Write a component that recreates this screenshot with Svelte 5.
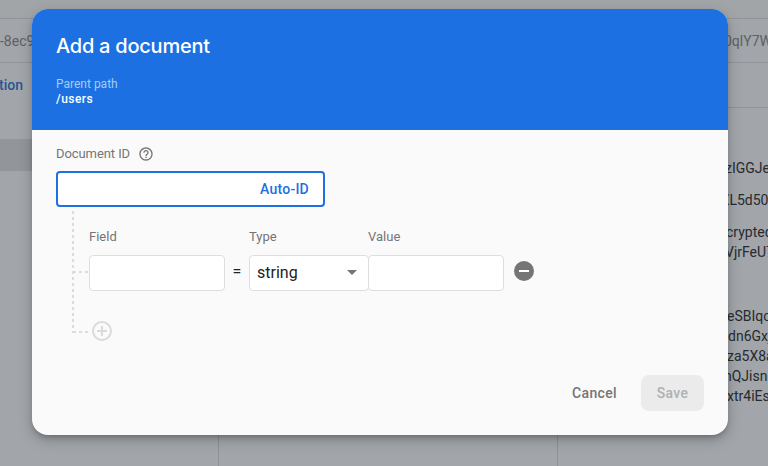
<script>
  let documentId = $state('');
  let field = $state('');
  let value = $state('');

  // Visible ends of the field values in the right-hand pane; the gap goes above each line.
  const values = [
    { text: 'zIGGJe', gap: 50, shift: -1 },
    { text: 'ZL5d50', gap: 12, shift: -5 },
    { text: 'crypted', gap: 12, shift: 0 },
    { text: 'VjrFeU7', gap: 0, shift: -1 },
    { text: 'eSBIqc', gap: 44, shift: 1 },
    { text: 'dn6Gxj', gap: 0, shift: 2 },
    { text: 'za5X8a', gap: 0, shift: 1 },
    { text: 'nQJisn', gap: 0, shift: -2 },
    { text: 'xtr4iEs', gap: 0, shift: 1 }
  ];
</script>

<div class="screen">
  <div class="page">
    <div class="topbar"></div>
    <div class="heads">
      <div class="head left">-8ec9</div>
      <div class="head right">0qlY7W</div>
    </div>
    <div class="columns">
      <div class="pane first">
        <div class="action">tion</div>
        <div class="selected"></div>
      </div>
      <div class="pane middle"></div>
      <div class="pane last">
        <div class="strip"></div>
        <div class="values">
          {#each values as v}
            <div class="line" style="margin-top:{v.gap}px;text-indent:{v.shift}px">{v.text}</div>
          {/each}
        </div>
      </div>
    </div>
  </div>

  <div class="dialog" role="dialog" aria-label="Add a document">
    <header>
      <h1>Add a document</h1>
      <div class="parent">Parent path</div>
      <div class="path">/users</div>
    </header>
    <div class="content">
      <div class="id-label">
        <span>Document ID</span>
        <svg width="16" height="16" viewBox="0 0 24 24" fill="#757575">
          <path d="M11 18h2v-2h-2v2zm1-16C6.48 2 2 6.48 2 12s4.480 10 10 10 10-4.480 10-10S17.520 2 12 2zm0 18c-4.410 0-8-3.590-8-8s3.590-8 8-8 8 3.590 8 8-3.590 8-8 8zm0-14c-2.210 0-4 1.790-4 4h2c0-1.100.9-2 2-2s2 .9 2 2c0 2-3 1.750-3 5h2c0-2.250 3-2.500 3-5 0-2.210-1.790-4-4-4z" />
        </svg>
      </div>
      <div class="id-box">
        <input aria-label="Document ID" bind:value={documentId} />
        <button class="auto">Auto-ID</button>
      </div>
      <div class="tree">
        <svg class="branches" width="17" height="124" viewBox="0 0 17 124" fill="none" stroke="#dcdcdc" stroke-width="2">
          <path d="M2 1V118" stroke-dasharray="3 3" />
          <path d="M1 62H5M8 62H11M14 62H17M1 122H5M8 122H11M14 122H17" />
        </svg>
        <div class="fields">
          <div class="row">
            <label class="field"><span>Field</span><input bind:value={field} /></label>
            <div class="equals">=</div>
            <div class="type">
              <span>Type</span>
              <div class="select">string
                <svg width="10" height="5" viewBox="0 0 10 5"><path d="M0 0h10L5 5z" fill="#757575" /></svg>
              </div>
            </div>
            <label class="value"><span>Value</span><input bind:value={value} /></label>
            <button class="remove" aria-label="Remove field">
              <svg width="24" height="24" viewBox="0 0 24 24"><circle cx="12" cy="12" r="10" fill="#757575" /><path d="M7 12h10" stroke="#fff" stroke-width="2" /></svg>
            </button>
          </div>
          <button class="add" aria-label="Add field">
            <svg width="24" height="24" viewBox="0 0 24 24" fill="none" stroke="#dadada" stroke-width="2"><circle cx="12" cy="12" r="9" /><path d="M7 12h10M12 7v10" /></svg>
          </button>
        </div>
      </div>
      <footer>
        <button class="cancel">Cancel</button>
        <button class="save" disabled>Save</button>
      </footer>
    </div>
  </div>
</div>

<style>
  .screen {
    position: relative;
    width: 768px;
    height: 466px;
    overflow: hidden;
    font-family: Roboto, sans-serif;
  }
  .screen * { box-sizing: border-box; }
  .page {
    display: flex;
    flex-direction: column;
    height: 100%;
    background: #a2a6ab;
  }
  .topbar { height: 19px; background: #a2a5a8; border-bottom: 1px solid #8f9296; }
  .heads {
    display: flex;
    justify-content: space-between;
    height: 44px;
    line-height: 44px;
    border-bottom: 1px solid #8f9296;
    background: #a2a5a9;
    color: #5e6164;
    font-size: 14px;
  }
  .head.right { width: 44px; white-space: nowrap; }
  .columns { display: flex; flex: 1; }
  .pane { width: 219px; border-right: 1px solid #8f9296; }
  .middle { width: 339px; }
  .last { width: 210px; border: 0; }
  .action {
    height: 76px;
    padding-top: 12px;
    text-indent: -1px;
    line-height: 20px;
    font-size: 14px;
    font-weight: 500;
    color: #295594;
  }
  .selected { height: 32px; background: #929599; }
  .strip { height: 45px; border-bottom: 1px solid #8f9296; }
  .values {
    width: 42px;
    margin-left: 168px;
    line-height: 20px;
    font-size: 14px;
    color: #272a2e;
    white-space: nowrap;
  }
  .dialog {
    position: absolute;
    left: 32px;
    top: 9px;
    width: 696px;
    height: 426px;
    border-radius: 16px;
    overflow: hidden;
    background: #fafafa;
    box-shadow: 0 3px 5px -1px rgba(0, 0, 0, .2), 0 5px 14px rgba(0, 0, 0, .22);
  }
  header { height: 121px; padding: 24px 24px 0; background: #1c70e2; color: #fff; }
  h1 {
    margin: 0;
    font: 500 20px/26px Inter, sans-serif;
    letter-spacing: -.24px;
  }
  .parent { margin-top: 18px; font-size: 12px; line-height: 15px; color: #a9cbf8; }
  .path { font-size: 12px; line-height: 15px; font-weight: 500; letter-spacing: .45px; }
  .content { padding: 16px 24px 0; }
  .id-label {
    display: flex;
    align-items: center;
    gap: 8px;
    height: 16px;
    font-size: 13px;
    color: #757575;
  }
  .id-label span { height: 16px; line-height: 15px; letter-spacing: -.08px; }
  .id-box {
    display: flex;
    align-items: center;
    width: 269px;
    height: 36px;
    margin-top: 9px;
    border: 2px solid #1c70e2;
    border-radius: 4px;
    background: #fff;
  }
  .id-box input { flex: 1; min-width: 0; border: 0; outline: 0; background: none; }
  button { padding: 0; border: 0; background: none; font: 500 14px/20px Roboto, sans-serif; }
  .auto { margin-right: 14px; color: #1c70e2; letter-spacing: .25px; }
  .tree { display: flex; height: 140px; padding: 3px 0 0 15px; }
  .branches { flex: none; }
  .fields { padding: 19px 0 0 1px; }
  .row { display: flex; align-items: flex-end; height: 62px; }
  .row span { display: block; height: 26px; font-size: 13px; line-height: 16px; color: #757575; }
  .field, .value { width: 136px; }
  .field input, .value input {
    display: block;
    width: 136px;
    height: 36px;
    border: 1px solid #dedede;
    border-radius: 4px;
    background: #fff;
    outline: 0;
  }
  .value { margin-left: -1px; }
  .equals { width: 24px; height: 36px; line-height: 33px; text-align: center; font-size: 16px; color: #212121; }
  .type { width: 120px; }
  .select {
    display: flex;
    align-items: center;
    justify-content: space-between;
    height: 36px;
    padding: 0 11px 2px 7px;
    border: 1px solid #dedede;
    border-radius: 4px;
    background: #fff;
    font-size: 16px;
    color: #212121;
  }
  .remove { height: 24px; margin: 0 0 8px 7.7px; }
  .add { height: 24px; margin: 28px 0 0 1px; }
  svg { display: block; }
  footer { display: flex; justify-content: flex-end; align-items: center; height: 36px; margin-top: 28px; }
  .cancel { margin-right: 24px; color: #757575; letter-spacing: .35px; }
  .save { width: 63px; height: 36px; border-radius: 8px; background: #ebebeb; color: #b0b0b0; letter-spacing: .35px; }
</style>
